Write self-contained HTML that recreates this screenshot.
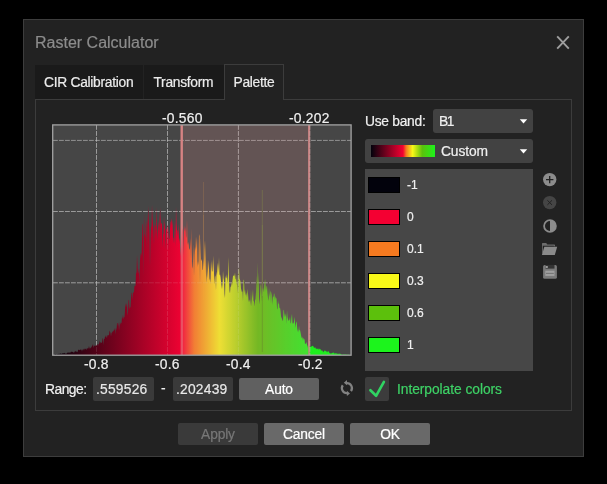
<!DOCTYPE html>
<html>
<head>
<meta charset="utf-8">
<title>Raster Calculator</title>
<style>
html,body{margin:0;padding:0;background:#000;}
body{width:607px;height:484px;overflow:hidden;position:relative;font-family:"Liberation Sans",sans-serif;font-size:13.8px;color:#f0f0f0;}
.abs{position:absolute;}
#dlg{left:23px;top:19px;width:559px;height:436px;background:#222;border:1px solid #3d3d3d;}
#title{left:35px;top:33px;font-size:16px;color:#8c8c8c;line-height:20px;white-space:nowrap;}
.tab{top:65px;height:34px;background:#1a1a1a;line-height:34px;white-space:nowrap;color:#ececec;}
#panel{left:35px;top:99px;width:537px;height:312px;border:1px solid #3c3c3c;box-sizing:border-box;}
.dd{background:#424242;border-radius:3px;}
.txt{white-space:nowrap;line-height:16px;}
.txt,.tab,.btn,.inp,.lbl,#title{will-change:transform;-webkit-text-stroke:0.2px;}
.btn{height:22px;border-radius:2px;text-align:center;line-height:23px;letter-spacing:-0.15px;background:#696969;color:#fff;}
.inp{height:24px;background:#3a3a3a;border-radius:2px;line-height:25px;letter-spacing:0.23px;color:#e8e8e8;}
.sw{left:368px;width:30px;height:14px;border:1px solid #000;}
.lbl{left:407px;font-size:12px;line-height:14px;color:#f0f0f0;}
</style>
</head>
<body>
<div id="dlg" class="abs"></div>
<div id="title" class="abs">Raster Calculator</div>
<svg class="abs" style="left:555px;top:34px" width="16" height="16" viewBox="0 0 16 16"><path d="M2.2 2.4 L13.8 14.6 M13.8 2.4 L2.2 14.6" stroke="#9e9e9e" stroke-width="1.9" fill="none"/></svg>

<!-- tabs -->
<div class="abs tab" style="left:35px;width:108px;"><span style="padding-left:9px;letter-spacing:-0.28px;position:relative;top:1px">CIR Calibration</span></div>
<div class="abs tab" style="left:144px;width:80px;"><span style="padding-left:9.5px;letter-spacing:-0.3px;position:relative;top:1px">Transform</span></div>
<div id="panel" class="abs"></div>
<div class="abs tab" style="left:224px;width:58px;top:64px;height:35px;background:#222;border:1px solid #3c3c3c;border-bottom:none;line-height:35px"><span style="padding-left:8.5px;letter-spacing:-0.3px">Palette</span></div>

<!-- chart -->
<svg class="abs" style="left:0;top:0" width="607" height="484" viewBox="0 0 607 484">
<defs>
<linearGradient id="hg" gradientUnits="userSpaceOnUse" x1="53" y1="0" x2="351" y2="0">
<stop offset="0" stop-color="#000008"/>
<stop offset="0.4315" stop-color="#f40032"/>
<stop offset="0.4742" stop-color="#f57a20"/>
<stop offset="0.5594" stop-color="#f0f020"/>
<stop offset="0.6872" stop-color="#5cc00c"/>
<stop offset="0.8577" stop-color="#1cf41c"/>
<stop offset="1" stop-color="#1cf41c"/>
</linearGradient>
</defs>
<rect x="53" y="125" width="298" height="230" fill="#464646"/>
<g stroke="#c4c4c4" stroke-width="0.6" stroke-dasharray="4.8 1.2" fill="none">
<path d="M53 140.4H351M53 211.5H351M53 282.8H351"/>
<path d="M96.5 125V355M167.5 125V355M238.4 125V355M309.4 125V355"/>
</g>
<path d="M181.7 125V355" stroke="#c87c7c" stroke-width="2.2"/>
<path d="M309.1 125V355" stroke="#c48080" stroke-width="2"/>
<path d="M203.6 182V215" stroke="#c89040" stroke-width="0.7" opacity="0.35"/><path d="M203.6 215V300" stroke="#c89040" stroke-width="0.7" opacity="0.6"/>
<path d="M262.3 190V225" stroke="#7aa030" stroke-width="0.7" opacity="0.45"/><path d="M262.3 225V300" stroke="#7aa030" stroke-width="0.7" opacity="0.75"/>
<path fill="url(#hg)" opacity="0.97" d="M53.5,355 L53.5,354.9 L54.0,354.7 L54.5,354.7 L55.0,354.1 L55.5,354.0 L56.0,354.3 L56.5,354.4 L57.0,354.5 L57.5,354.1 L58.0,354.0 L58.5,353.8 L59.0,354.1 L59.5,353.6 L60.0,354.2 L60.5,353.6 L61.0,353.1 L61.5,354.0 L62.0,354.1 L62.5,353.1 L63.0,353.4 L63.5,353.0 L64.0,353.5 L64.5,353.0 L65.0,352.7 L65.5,354.1 L66.0,353.5 L66.5,353.7 L67.0,353.1 L67.5,352.7 L68.0,352.2 L68.5,352.9 L69.0,351.9 L69.5,353.0 L70.0,352.2 L70.5,352.7 L71.0,351.4 L71.5,352.0 L72.0,351.6 L72.5,351.9 L73.0,352.1 L73.5,352.5 L74.0,352.7 L74.5,351.9 L75.0,351.1 L75.5,351.7 L76.0,350.6 L76.5,351.9 L77.0,351.7 L77.5,352.2 L78.0,350.3 L78.5,349.4 L79.0,350.0 L79.5,350.2 L80.0,349.6 L80.5,349.7 L81.0,349.4 L81.5,349.8 L82.0,351.8 L82.5,349.2 L83.0,349.9 L83.5,348.5 L84.0,350.8 L84.5,348.5 L85.0,349.0 L85.5,348.6 L86.0,349.5 L86.5,349.7 L87.0,347.8 L87.5,348.6 L88.0,348.7 L88.5,348.0 L89.0,345.7 L89.5,348.9 L90.0,347.0 L90.5,348.4 L91.0,348.0 L91.5,346.8 L92.0,346.2 L92.5,345.3 L93.0,344.1 L93.5,347.9 L94.0,345.9 L94.5,346.1 L95.0,344.8 L95.5,346.1 L96.0,346.2 L96.5,345.1 L97.0,344.7 L97.5,343.7 L98.0,346.3 L98.5,343.9 L99.0,343.9 L99.5,340.3 L100.0,343.8 L100.5,342.3 L101.0,341.9 L101.5,343.1 L102.0,342.8 L102.5,339.1 L103.0,337.8 L103.5,345.0 L104.0,338.9 L104.5,339.1 L105.0,336.7 L105.5,336.7 L106.0,335.1 L106.5,337.6 L107.0,337.8 L107.5,334.8 L108.0,335.7 L108.5,334.7 L109.0,335.6 L109.5,330.4 L110.0,331.7 L110.5,333.0 L111.0,336.6 L111.5,332.9 L112.0,332.5 L112.5,332.1 L113.0,330.8 L113.5,331.4 L114.0,329.2 L114.5,330.4 L115.0,327.4 L115.5,334.4 L116.0,327.5 L116.5,330.6 L117.0,323.0 L117.5,323.1 L118.0,326.2 L118.5,322.2 L119.0,330.4 L119.5,326.1 L120.0,321.4 L120.5,324.7 L121.0,322.6 L121.5,323.5 L122.0,316.9 L122.5,318.9 L123.0,314.2 L123.5,319.8 L124.0,316.7 L124.5,317.4 L125.0,309.8 L125.5,302.9 L126.0,307.4 L126.5,304.9 L127.0,302.9 L127.5,315.8 L128.0,312.3 L128.5,300.8 L129.0,299.6 L129.5,309.3 L130.0,306.7 L130.5,307.8 L131.0,299.0 L131.5,293.3 L132.0,292.5 L132.5,300.2 L133.0,292.1 L133.5,293.0 L134.0,291.6 L134.5,285.8 L135.0,285.7 L135.5,286.1 L136.0,272.3 L136.5,273.4 L137.0,254.4 L137.5,265.5 L138.0,273.8 L138.5,272.1 L139.0,267.9 L139.5,283.3 L140.0,260.2 L140.5,254.7 L141.0,252.6 L141.5,255.9 L142.0,238.1 L142.5,224.4 L143.0,223.7 L143.5,275.4 L144.0,212.4 L144.5,233.5 L145.0,236.1 L145.5,237.9 L146.0,219.2 L146.5,227.0 L147.0,250.4 L147.5,213.7 L148.0,227.6 L148.5,205.3 L149.0,224.3 L149.5,234.5 L150.0,267.1 L150.5,238.6 L151.0,226.9 L151.5,226.4 L152.0,204.3 L152.5,218.2 L153.0,223.9 L153.5,231.0 L154.0,244.6 L154.5,221.7 L155.0,226.3 L155.5,225.0 L156.0,237.3 L156.5,206.7 L157.0,225.8 L157.5,240.5 L158.0,226.4 L158.5,220.9 L159.0,231.4 L159.5,209.9 L160.0,237.4 L160.5,206.9 L161.0,224.8 L161.5,222.7 L162.0,223.7 L162.5,247.7 L163.0,233.6 L163.5,234.4 L164.0,216.2 L164.5,228.6 L165.0,221.1 L165.5,250.1 L166.0,228.9 L166.5,229.7 L167.0,227.3 L167.5,224.6 L168.0,251.2 L168.5,225.9 L169.0,238.2 L169.5,239.2 L170.0,229.7 L170.5,222.0 L171.0,221.5 L171.5,218.2 L172.0,225.4 L172.5,219.9 L173.0,237.2 L173.5,238.3 L174.0,243.5 L174.5,234.7 L175.0,220.6 L175.5,246.9 L176.0,206.5 L176.5,224.1 L177.0,230.0 L177.5,230.8 L178.0,236.4 L178.5,223.3 L179.0,241.2 L179.5,237.4 L180.0,244.4 L180.5,251.5 L181.0,256.6 L181.5,242.5 L182.0,229.9 L182.5,228.6 L183.0,255.7 L183.5,242.1 L184.0,225.3 L184.5,229.2 L185.0,231.7 L185.5,226.2 L186.0,238.3 L186.5,236.1 L187.0,219.0 L187.5,242.3 L188.0,245.0 L188.5,241.4 L189.0,248.2 L189.5,250.1 L190.0,248.0 L190.5,237.9 L191.0,259.2 L191.5,228.0 L192.0,266.3 L192.5,268.7 L193.0,261.1 L193.5,243.7 L194.0,276.4 L194.5,254.9 L195.0,246.4 L195.5,251.1 L196.0,236.0 L196.5,249.0 L197.0,236.6 L197.5,267.1 L198.0,261.0 L198.5,265.6 L199.0,233.9 L199.5,236.2 L200.0,285.1 L200.5,237.4 L201.0,258.7 L201.5,260.2 L202.0,261.1 L202.5,269.9 L203.0,269.5 L203.5,259.1 L204.0,267.2 L204.5,249.4 L205.0,240.0 L205.5,256.4 L206.0,274.8 L206.5,282.9 L207.0,258.5 L207.5,278.2 L208.0,269.7 L208.5,260.0 L209.0,268.6 L209.5,280.8 L210.0,278.3 L210.5,283.9 L211.0,261.0 L211.5,271.9 L212.0,259.2 L212.5,271.3 L213.0,271.6 L213.5,255.6 L214.0,273.1 L214.5,284.4 L215.0,275.2 L215.5,276.9 L216.0,290.6 L216.5,271.5 L217.0,275.5 L217.5,266.9 L218.0,262.6 L218.5,272.5 L219.0,257.0 L219.5,275.5 L220.0,274.3 L220.5,277.0 L221.0,281.5 L221.5,289.3 L222.0,282.0 L222.5,289.1 L223.0,270.5 L223.5,278.0 L224.0,281.0 L224.5,293.9 L225.0,298.2 L225.5,275.7 L226.0,278.4 L226.5,277.4 L227.0,273.9 L227.5,283.9 L228.0,276.2 L228.5,257.0 L229.0,281.0 L229.5,291.1 L230.0,293.6 L230.5,286.2 L231.0,287.3 L231.5,281.6 L232.0,286.0 L232.5,280.5 L233.0,275.9 L233.5,276.1 L234.0,274.5 L234.5,276.8 L235.0,272.3 L235.5,278.7 L236.0,279.4 L236.5,285.0 L237.0,273.8 L237.5,284.7 L238.0,293.6 L238.5,276.4 L239.0,267.0 L239.5,278.5 L240.0,279.8 L240.5,281.6 L241.0,288.4 L241.5,290.6 L242.0,292.6 L242.5,290.5 L243.0,301.3 L243.5,280.3 L244.0,279.5 L244.5,293.1 L245.0,289.2 L245.5,293.8 L246.0,295.8 L246.5,292.2 L247.0,297.8 L247.5,288.8 L248.0,293.5 L248.5,299.8 L249.0,302.2 L249.5,300.4 L250.0,299.2 L250.5,305.8 L251.0,288.4 L251.5,306.8 L252.0,298.8 L252.5,294.8 L253.0,288.7 L253.5,300.7 L254.0,301.7 L254.5,306.5 L255.0,300.8 L255.5,299.1 L256.0,292.1 L256.5,275.0 L257.0,306.8 L257.5,262.0 L258.0,287.3 L258.5,272.0 L259.0,298.9 L259.5,304.4 L260.0,296.5 L260.5,286.3 L261.0,283.3 L261.5,292.1 L262.0,302.0 L262.5,289.9 L263.0,287.7 L263.5,292.4 L264.0,286.1 L264.5,279.4 L265.0,292.5 L265.5,278.3 L266.0,290.8 L266.5,286.7 L267.0,285.5 L267.5,292.9 L268.0,298.2 L268.5,301.1 L269.0,286.5 L269.5,297.3 L270.0,292.4 L270.5,290.3 L271.0,303.7 L271.5,291.8 L272.0,295.1 L272.5,304.9 L273.0,296.0 L273.5,297.4 L274.0,292.9 L274.5,294.7 L275.0,300.5 L275.5,296.1 L276.0,298.0 L276.5,298.6 L277.0,308.3 L277.5,309.5 L278.0,300.0 L278.5,304.6 L279.0,302.9 L279.5,308.4 L280.0,307.5 L280.5,310.8 L281.0,316.3 L281.5,317.8 L282.0,318.9 L282.5,320.3 L283.0,321.3 L283.5,309.6 L284.0,310.8 L284.5,317.4 L285.0,312.8 L285.5,316.9 L286.0,313.4 L286.5,324.1 L287.0,309.9 L287.5,317.1 L288.0,319.2 L288.5,320.7 L289.0,320.4 L289.5,319.4 L290.0,316.4 L290.5,323.5 L291.0,322.9 L291.5,317.3 L292.0,313.8 L292.5,323.8 L293.0,323.0 L293.5,323.8 L294.0,321.5 L294.5,316.8 L295.0,323.1 L295.5,328.0 L296.0,322.9 L296.5,321.3 L297.0,325.3 L297.5,332.1 L298.0,328.7 L298.5,332.4 L299.0,325.5 L299.5,330.5 L300.0,330.0 L300.5,332.3 L301.0,334.9 L301.5,337.2 L302.0,338.5 L302.5,336.5 L303.0,340.9 L303.5,337.8 L304.0,339.0 L304.5,339.4 L305.0,344.0 L305.5,343.6 L306.0,343.8 L306.5,341.7 L307.0,344.9 L307.5,345.7 L308.0,348.1 L308.5,346.1 L309.0,346.2 L309.5,344.7 L310.0,346.7 L310.5,346.8 L311.0,346.4 L311.5,346.7 L312.0,346.1 L312.5,345.8 L313.0,346.0 L313.5,346.6 L314.0,347.9 L314.5,347.2 L315.0,348.2 L315.5,347.0 L316.0,349.6 L316.5,348.4 L317.0,348.8 L317.5,349.2 L318.0,348.0 L318.5,350.1 L319.0,348.3 L319.5,349.2 L320.0,349.2 L320.5,348.9 L321.0,350.4 L321.5,350.8 L322.0,349.9 L322.5,351.0 L323.0,351.5 L323.5,352.6 L324.0,350.9 L324.5,350.2 L325.0,351.4 L325.5,350.4 L326.0,351.3 L326.5,351.2 L327.0,352.6 L327.5,352.1 L328.0,350.8 L328.5,351.4 L329.0,352.1 L329.5,353.3 L330.0,353.0 L330.5,353.7 L331.0,353.0 L331.5,353.5 L332.0,353.2 L332.5,352.4 L333.0,353.2 L333.5,352.6 L334.0,352.6 L334.5,353.8 L335.0,353.5 L335.5,352.9 L336.0,353.8 L336.5,353.4 L337.0,353.0 L337.5,354.3 L338.0,353.4 L338.5,354.1 L339.0,353.6 L339.5,353.8 L340.0,353.7 L340.5,353.8 L341.0,354.4 L341.5,354.5 L342.0,354.7 L342.5,354.7 L343.0,354.7 L343.5,354.6 L344.0,354.5 L344.5,354.8 L345.0,354.6 L345.5,354.6 L346.0,354.7 L346.5,354.7 L347.0,354.7 L347.5,354.8 L348.0,354.8 L348.5,354.8 L349.0,354.8 L349.5,354.9 L350.0,355.0 L350.5,355.0 L350.5,355 Z"/>
<path d="M262.3 296V352" stroke="#4a7a18" stroke-width="0.7" opacity="0.7"/>
<rect x="181.6" y="125" width="127.5" height="230" fill="rgb(255,159,159)" opacity="0.157"/>
<g stroke="#d8d8d8" stroke-width="0.8" stroke-dasharray="4.8 1.2" fill="none" opacity="0.16">
<path d="M53 211.5H351M53 282.8H351"/>
<path d="M96.5 125V355M167.5 125V355M238.4 125V355M309.4 125V355"/>
</g>
<path d="M181.7 125V355" stroke="#e08888" stroke-width="2.2" opacity="0.55"/>
<path d="M309.1 125V355" stroke="#c48080" stroke-width="2" opacity="0.8"/>
<path d="M309.9 125V355" stroke="#d8c8c8" stroke-width="0.6" stroke-dasharray="4.8 1.2" opacity="0.6"/>
<rect x="52.7" y="124.9" width="298.4" height="230.3" fill="none" stroke="#a4a4a4" stroke-width="1.3"/>
</svg>

<!-- chart labels -->
<div class="abs txt" style="left:161.8px;top:111px;letter-spacing:0.25px">-0.560</div>
<div class="abs txt" style="left:288.8px;top:111px;letter-spacing:0.25px">-0.202</div>
<div class="abs txt" style="left:84px;top:357px;letter-spacing:0.2px">-0.8</div>
<div class="abs txt" style="left:155px;top:357px;letter-spacing:0.2px">-0.6</div>
<div class="abs txt" style="left:226px;top:357px;letter-spacing:0.2px">-0.4</div>
<div class="abs txt" style="left:298px;top:357px;letter-spacing:0.2px">-0.2</div>

<!-- range row -->
<div class="abs txt" style="left:44.6px;top:382px;letter-spacing:-0.5px">Range:</div>
<div class="abs inp" style="left:93px;top:377px;width:61px;"><span style="padding-left:3px">.559526</span></div>
<div class="abs txt" style="left:160.5px;top:381px;">-</div>
<div class="abs inp" style="left:173px;top:377px;width:60px;"><span style="padding-left:3px">.202439</span></div>
<div class="abs btn" style="left:239px;top:378px;width:80px;background:#606060;">Auto</div>

<!-- refresh icon -->
<svg class="abs" style="left:335px;top:376px" width="24" height="24" viewBox="335 376 24 24">
<g fill="none" stroke="#828282" stroke-width="2.2">
<path d="M346.7 383.15 A5 5 0 0 1 351 391.05"/>
<path d="M347.1 393.15 A5 5 0 0 1 342.8 385.25"/>
</g>
<path d="M343.8 382.7 L347 380.1 L347 385.3 Z" fill="#828282"/>
<path d="M350 393.4 L346.9 390.8 L346.9 396 Z" fill="#828282"/>
</svg>

<!-- right column -->
<div class="abs txt" style="left:364.5px;top:114px;letter-spacing:-0.27px">Use band:</div>
<div class="abs dd" style="left:433px;top:109px;width:100px;height:24px;"></div>
<div class="abs txt" style="left:439px;top:114px;letter-spacing:-1.5px">B1</div>
<svg class="abs" style="left:519px;top:118px" width="9" height="6" viewBox="0 0 9 6"><path d="M0.8 1.2H8.2L4.5 5.4Z" fill="#fff"/></svg>
<div class="abs dd" style="left:365px;top:139px;width:168px;height:24px;"></div>
<div class="abs" style="left:371px;top:145px;width:64px;height:12px;background:linear-gradient(to right,#02020c 0%,#f40032 50%,#f57a20 55%,#f8f818 65%,#5cc00c 80%,#1cf41c 100%);"></div>
<div class="abs txt" style="left:441px;top:144px;letter-spacing:-0.1px">Custom</div>
<svg class="abs" style="left:519px;top:148px" width="9" height="6" viewBox="0 0 9 6"><path d="M0.8 1.2H8.2L4.5 5.4Z" fill="#fff"/></svg>

<div class="abs" style="left:365px;top:169px;width:168px;height:202px;background:#474747;"></div>
<div class="abs sw" style="top:177px;background:#02020c"></div><div class="abs lbl" style="top:178px">-1</div>
<div class="abs sw" style="top:209px;background:#f40032"></div><div class="abs lbl" style="top:210px">0</div>
<div class="abs sw" style="top:241px;background:#f57a20"></div><div class="abs lbl" style="top:242px">0.1</div>
<div class="abs sw" style="top:273px;background:#f8f818"></div><div class="abs lbl" style="top:274px">0.3</div>
<div class="abs sw" style="top:305px;background:#5cc00c"></div><div class="abs lbl" style="top:306px">0.6</div>
<div class="abs sw" style="top:337px;background:#1cf41c"></div><div class="abs lbl" style="top:338px">1</div>

<!-- side icons -->
<svg class="abs" style="left:540px;top:170px" width="20" height="112" viewBox="540 170 20 112">
<circle cx="549.7" cy="179.6" r="6.7" fill="#8c8c8c"/>
<path d="M546 179.6H553.4M549.7 175.9V183.3" stroke="#222" stroke-width="1.3" fill="none"/>
<circle cx="549.7" cy="202.6" r="6.7" fill="#454545"/>
<path d="M547.4 200.3L552 204.9M552 200.3L547.4 204.9" stroke="#222" stroke-width="1" fill="none"/>
<circle cx="550" cy="226" r="5.9" fill="none" stroke="#8a8a8a" stroke-width="1.8"/>
<path d="M550 220 A6 6 0 0 1 550 232 Z" fill="#8c8c8c"/>
<!-- folder -->
<path d="M542 254.3 V243.6 q0-.7 .7-.7 h3.2 q.5 0 .8 .5 l.6 1.2 h7 q.7 0 .7 .7 v1 h-1.2 v-.5 h-11 v6.5z" fill="#6c6c6c"/>
<path d="M544.3 246.8 H557.2 L554.8 255 H541.9 Z" fill="#8a8a8a"/>
<!-- save -->
<rect x="543.1" y="264.9" width="13.8" height="13.9" rx="1.6" fill="#7a7a7a"/>
<rect x="545.5" y="264.9" width="9" height="3.7" fill="#333"/>
<rect x="545.6" y="266" width="2.2" height="2" fill="#9a9a9a"/>
<rect x="545.3" y="270.7" width="9.2" height="5.2" fill="#a0a0a0"/>
<rect x="546" y="272.9" width="7.8" height="0.8" fill="#666"/>
</svg>

<!-- checkbox -->
<div class="abs" style="left:365px;top:377px;width:24px;height:24px;background:#3c3c3c;border-radius:2px;"></div>
<svg class="abs" style="left:365px;top:377px" width="24" height="24" viewBox="365 377 24 24"><path d="M370.4 390.2 L376.1 395.8 L383.9 381.8" fill="none" stroke="#30d462" stroke-width="2.6" stroke-linecap="round" stroke-linejoin="round"/></svg>
<div class="abs txt" style="left:397px;top:382px;color:#3ed266;letter-spacing:-0.05px">Interpolate colors</div>

<!-- bottom buttons -->
<div class="abs btn" style="left:178px;top:423px;width:80px;background:#3a3a3a;color:#777;">Apply</div>
<div class="abs btn" style="left:264px;top:423px;width:80px;">Cancel</div>
<div class="abs btn" style="left:350px;top:423px;width:80px;">OK</div>
</body>
</html>
